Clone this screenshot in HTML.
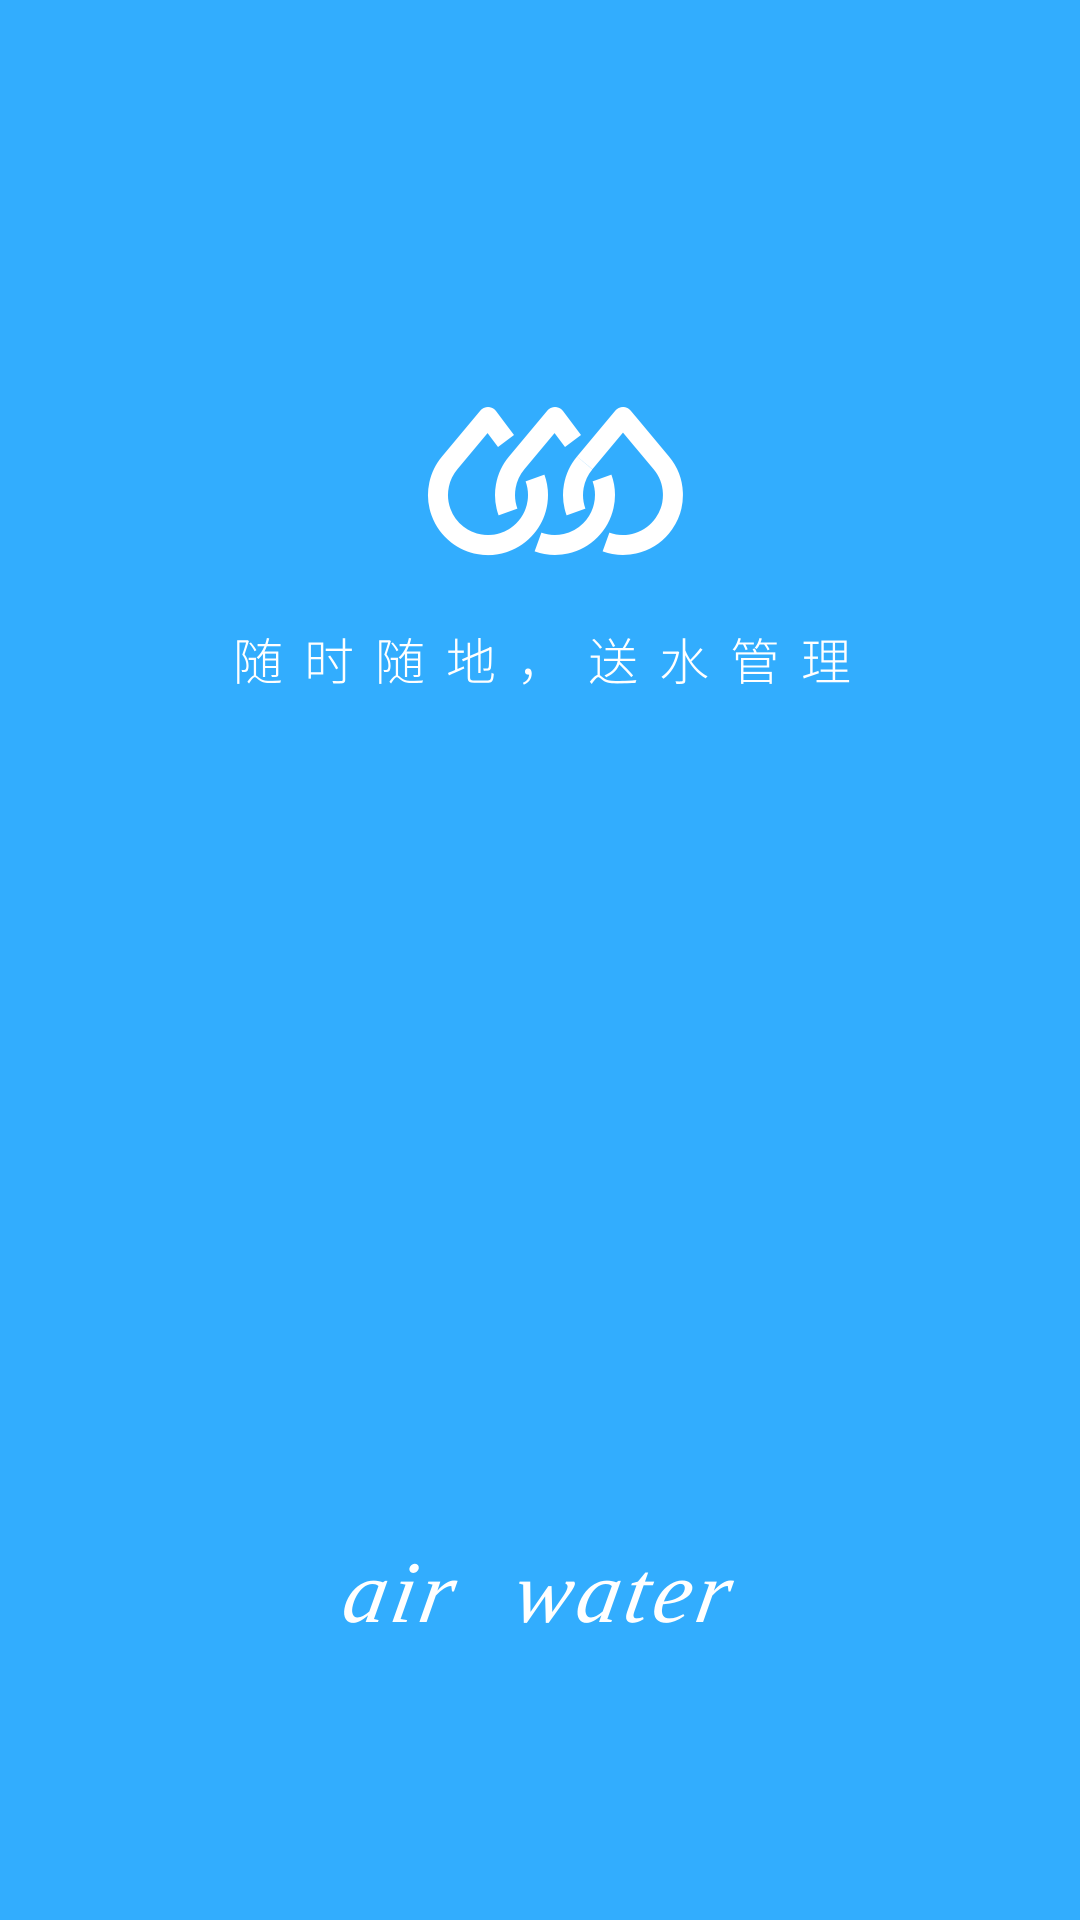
<!DOCTYPE html>
<html><head><meta charset="utf-8"><style>
html,body{margin:0;padding:0}
body{width:1080px;height:1920px;background:#32adfe;position:relative;overflow:hidden}
.tag{position:absolute;left:233px;top:633px;font-family:"Liberation Sans","Noto Sans CJK SC",sans-serif;font-size:50px;line-height:60px;letter-spacing:21px;color:#fff;font-weight:300;white-space:nowrap}
.brand{position:absolute;left:0;width:1080px;top:1544px;text-align:center;font-family:"Liberation Serif",serif;font-style:italic;font-size:88px;line-height:100px;color:#fff;word-spacing:30px;letter-spacing:4px;transform:skewX(-10deg)}
</style></head><body>
<svg width="1080" height="1920" style="position:absolute;left:0;top:0">
<g fill="none" stroke="#fff" stroke-width="20" stroke-linejoin="round" stroke-linecap="butt">
<path d="M506,441 L488,417 L449.7,462.9 A50 50 0 1 0 535,478"/>
<path d="M573,441 L555,417 L516.7,462.9 A50 50 0 0 0 508,512"/>
<path d="M538,542 A50 50 0 0 0 602,478"/>
<path d="M584.7,462.9 A50 50 0 0 0 576,512"/>
<path d="M606,542 A50 50 0 0 0 661.3,462.9 L623,417 L584.7,462.9"/>
</g>
</svg>
<div class="tag">随时随地，送水管理</div>
<div class="brand">air water</div>
</body></html>
